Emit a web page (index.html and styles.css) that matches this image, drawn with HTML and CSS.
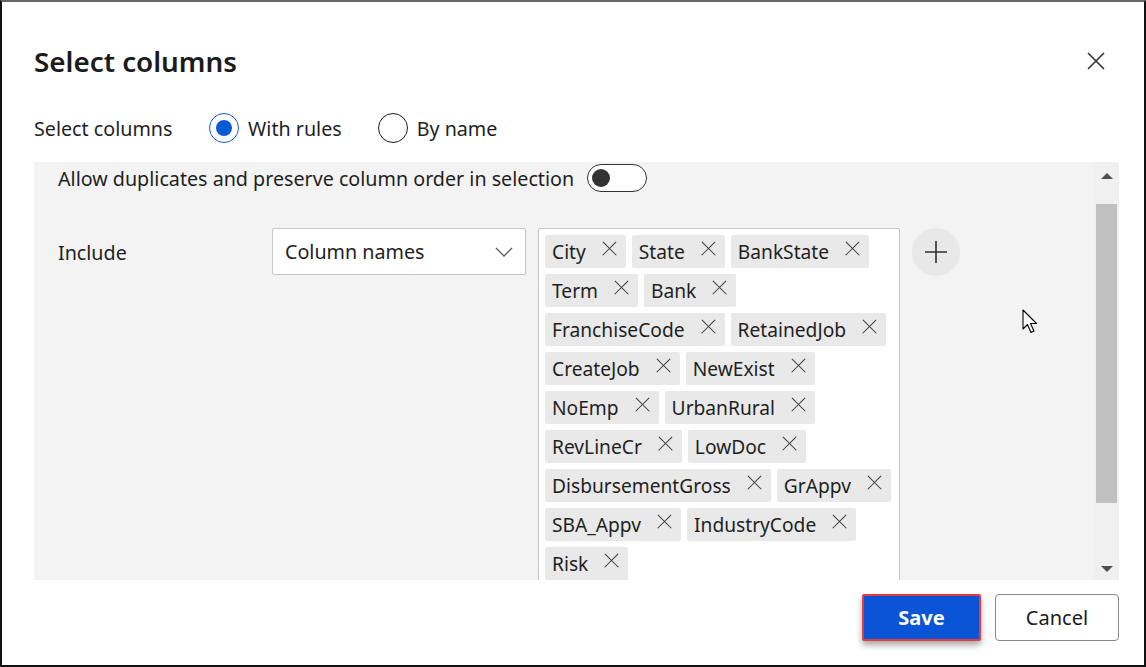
FILE: index.html
```html
<!DOCTYPE html>
<html lang="en">
<head>
<meta charset="utf-8">
<title>Select columns</title>
<link rel="stylesheet" href="styles.css">
</head>
<body>
<div class="dialog">
  <div class="header">
    <h1 class="title">Select columns</h1>
    <button class="close" aria-label="Close">
      <svg width="20" height="20" viewBox="0 0 20 20"><path d="M2 2 L18 18 M18 2 L2 18" stroke="#323130" stroke-width="1.6" fill="none"/></svg>
    </button>
  </div>

  <div class="radio-row">
    <span class="radio-label">Select columns</span>
    <label class="radio checked"><span class="dot"></span>With rules</label>
    <label class="radio"><span class="dot"></span>By name</label>
  </div>

  <div class="panel">
    <div class="panel-content">
      <div class="toggle-row">
        <span>Allow duplicates and preserve column order in selection</span>
        <span class="toggle"><span class="knob"></span></span>
      </div>
      <div class="include-row">
        <div class="include-label">Include</div>
        <div class="dropdown">
          <span>Column names</span>
          <svg width="18" height="10" viewBox="0 0 18 10"><path d="M1 1 L9 9 L17 1" stroke="#605e5c" stroke-width="1.3" fill="none"/></svg>
        </div>
        <div class="tagbox">
          <span class="tag">City<i class="x"></i></span>
          <span class="tag">State<i class="x"></i></span>
          <span class="tag">BankState<i class="x"></i></span>
          <span class="tag">Term<i class="x"></i></span>
          <span class="tag">Bank<i class="x"></i></span>
          <span class="tag">FranchiseCode<i class="x"></i></span>
          <span class="tag">RetainedJob<i class="x"></i></span>
          <span class="tag">CreateJob<i class="x"></i></span>
          <span class="tag">NewExist<i class="x"></i></span>
          <span class="tag">NoEmp<i class="x"></i></span>
          <span class="tag">UrbanRural<i class="x"></i></span>
          <span class="tag">RevLineCr<i class="x"></i></span>
          <span class="tag">LowDoc<i class="x"></i></span>
          <span class="tag">DisbursementGross<i class="x"></i></span>
          <span class="tag">GrAppv<i class="x"></i></span>
          <span class="tag">SBA_Appv<i class="x"></i></span>
          <span class="tag">IndustryCode<i class="x"></i></span>
          <span class="tag">Risk<i class="x"></i></span>
        </div>
        <button class="plus" aria-label="Add">
          <svg width="24" height="24" viewBox="0 0 24 24"><path d="M12 1 V23 M1 12 H23" stroke="#323130" stroke-width="1.6" fill="none"/></svg>
        </button>
      </div>
      <svg class="cursor" width="16" height="26" viewBox="0 0 16 26"><path d="M1 1 L1 20 L5.5 15.5 L9 23.5 L12 22 L8.5 14.5 L14.5 14.5 Z" fill="#fff" stroke="#000" stroke-width="1.1" stroke-linejoin="round"/></svg>
    </div>
    <div class="scrollbar">
      <span class="arrow up"></span>
      <div class="track"><div class="thumb"></div></div>
      <span class="arrow down"></span>
    </div>
  </div>

  <div class="footer">
    <button class="btn primary">Save</button>
    <button class="btn">Cancel</button>
  </div>
</div>
</body>
</html>
```

FILE: styles.css
```css
* { box-sizing: border-box; }
html, body { margin: 0; padding: 0; background: #fff; }
body {
  font-family: "Noto Sans", "Open Sans", sans-serif;
  color: #1f1f1f;
  font-size: 19.7px;
}
.dialog {
  width: 1146px;
  height: 667px;
  border-top: 2px solid #666;
  border-left: 2px solid #111;
  border-right: 2px solid #111;
  border-bottom: 2px solid #111;
  position: relative;
  overflow: hidden;
}
.header {
  height: 56px;
  margin-top: 31px;
  padding: 0 38px 0 32px;
  display: flex;
  align-items: center;
  justify-content: space-between;
}
.title {
  margin: 0;
  font-size: 27.8px;
  font-weight: 600;
  color: #1b1b1b;
}
.close {
  border: 0;
  background: none;
  padding: 0;
  width: 20px;
  height: 20px;
  display: flex;
}
.radio-row {
  margin-top: 24px;
  height: 30px;
  padding-left: 32px;
  display: flex;
  align-items: center;
}
.radio-label { width: 175px; }
.radio {
  display: flex;
  align-items: center;
  gap: 9px;
  margin-right: 36px;
}
.radio .dot {
  width: 30px;
  height: 30px;
  border: 1.5px solid #1b1b1b;
  border-radius: 50%;
  display: flex;
  align-items: center;
  justify-content: center;
}
.radio.checked .dot { border-color: #0a5ad6; }
.radio.checked .dot::after {
  content: "";
  width: 16px;
  height: 16px;
  border-radius: 50%;
  background: #0a5ad6;
}
.panel {
  margin: 19px 25px 0 32px;
  height: 418px;
  background: #f3f3f3;
  display: flex;
}
.panel-content {
  flex: 1;
  padding-left: 24px;
  overflow: hidden;
  position: relative;
}
.toggle-row {
  margin-top: 2px;
  height: 28px;
  display: flex;
  align-items: center;
  gap: 13px;
}
.toggle {
  width: 60px;
  height: 28px;
  border: 1px solid #333;
  border-radius: 14px;
  background: #fff;
  display: flex;
  align-items: center;
  padding-left: 4px;
}
.knob {
  width: 18px;
  height: 18px;
  border-radius: 50%;
  background: #333;
}
.include-row {
  margin-top: 36px;
  display: flex;
  align-items: flex-start;
}
.include-label {
  width: 214px;
  line-height: 50px;
}
.dropdown {
  width: 254px;
  height: 47px;
  background: #fff;
  border: 1px solid #c8c6c4;
  border-radius: 2px;
  display: flex;
  align-items: center;
  justify-content: space-between;
  padding: 0 12px 0 12px;
}
.tagbox {
  margin-left: 12px;
  width: 362px;
  background: #fff;
  border: 1px solid #c8c6c4;
  border-radius: 2px;
  padding: 6px;
  display: flex;
  flex-wrap: wrap;
  gap: 6px;
  height: 400px;
  align-content: flex-start;
}
.tag {
  height: 33px;
  background: #e9e9e9;
  border-radius: 2px;
  display: flex;
  align-items: center;
  padding: 0 9px 0 7px;
  white-space: nowrap;
  font-size: 19.2px;
  padding-bottom: 1px;
}
.x {
  width: 15px;
  height: 15px;
  margin-left: 16px;
  position: relative;
  margin-top: -6px;
}
.x::before, .x::after {
  content: "";
  position: absolute;
  left: -2px;
  top: 7px;
  width: 19px;
  height: 1.3px;
  background: #3a3a3a;
  transform: rotate(45deg);
}
.x::after { transform: rotate(-45deg); }
.plus {
  margin-left: 12px;
  width: 48px;
  height: 48px;
  border-radius: 50%;
  border: 0;
  background: #e8e8e8;
  display: flex;
  align-items: center;
  justify-content: center;
  padding: 0;
}
.cursor {
  position: absolute;
  left: 988px;
  top: 147px;
}
.scrollbar {
  width: 25px;
  background: #f0f0f0;
  display: flex;
  flex-direction: column;
  align-items: center;
}
.arrow {
  width: 0;
  height: 0;
  border-left: 6px solid transparent;
  border-right: 6px solid transparent;
}
.arrow.up { border-bottom: 6px solid #505050; margin: 11px 0 0; }
.arrow.down { border-top: 6px solid #505050; margin: 0 0 8px; }
.track { flex: 1; width: 100%; padding: 25px 2px 0; }
.thumb { height: 299px; background: #c0c0c0; }
.footer {
  margin-top: 14px;
  padding-right: 25px;
  display: flex;
  justify-content: flex-end;
  gap: 14px;
}
.btn {
  height: 47px;
  width: 124px;
  border: 1px solid #8a8886;
  border-radius: 4px;
  background: #fff;
  font-family: inherit;
  font-size: 20px;
  color: #1b1b1b;
}
.btn.primary {
  width: 119px;
  background: #0a55d6;
  color: #fff;
  font-weight: 700;
  border: 2px solid #e53a40;
  border-radius: 2px;
  box-shadow: 0 4px 6px rgba(0,0,0,0.35);
}
```
